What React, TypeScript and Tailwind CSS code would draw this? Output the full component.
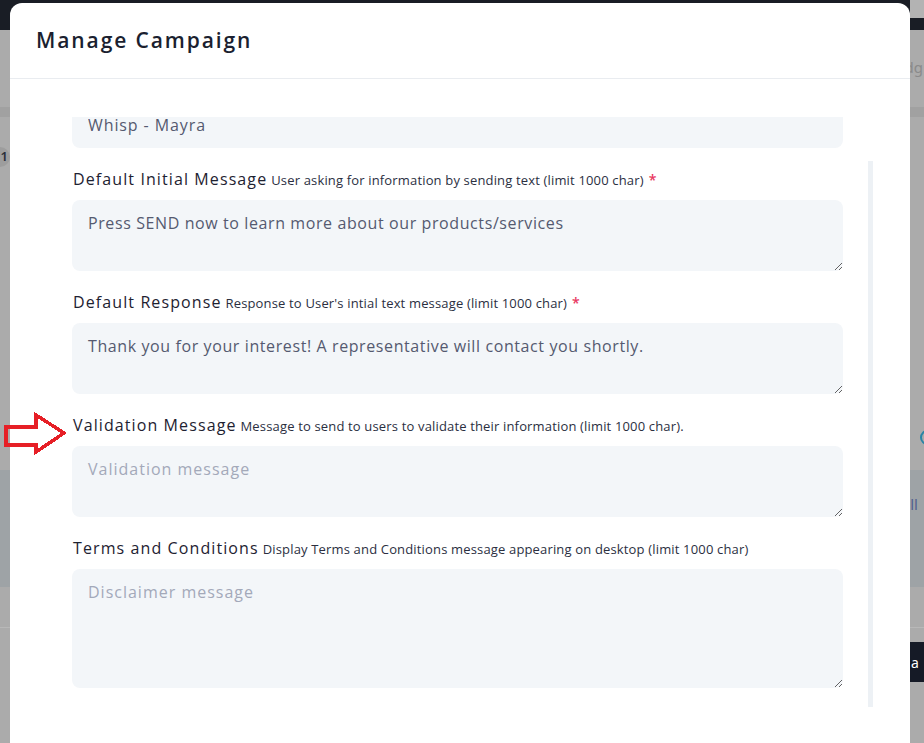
import type { ReactNode } from "react";

type Field = {
  label: string;
  hint: string;
  required?: boolean;
  value?: string;
  placeholder?: string;
  tall?: boolean;
};

const fields: Field[] = [
  {
    label: "Default Initial Message",
    hint: "User asking for information by sending text (limit 1000 char)",
    required: true,
    value: "Press SEND now to learn more about our products/services",
  },
  {
    label: "Default Response",
    hint: "Response to User's intial text message (limit 1000 char)",
    required: true,
    value: "Thank you for your interest! A representative will contact you shortly.",
  },
  {
    label: "Validation Message",
    hint: "Message to send to users to validate their information (limit 1000 char).",
    placeholder: "Validation message",
  },
  {
    label: "Terms and Conditions",
    hint: "Display Terms and Conditions message appearing on desktop (limit 1000 char)",
    placeholder: "Disclaimer message",
    tall: true,
  },
];

function FieldLabel({ label, hint, required }: { label: string; hint: string; required?: boolean }) {
  return (
    <div className="flex h-6 items-baseline whitespace-nowrap pl-px">
      <span className="text-[16px] tracking-[1.1px] text-[#1e2231]">{label}</span>
      <span className="ml-[4px] text-[13px] tracking-[0.16px] text-[#2b2f3f]">{hint}</span>
      {required ? <span className="ml-[5px] text-[14px] font-semibold text-[#e8375f]">*</span> : null}
    </div>
  );
}

function Backdrop({ children }: { children: ReactNode }) {
  return (
    <div className="relative h-[743px] w-[924px] overflow-hidden bg-[#ababab]">
      {/* dimmed page behind the dialog */}
      <div className="flex h-[30px]">
        <div className="flex-1 bg-[#191d25]" />
        <div className="flex w-[14px] flex-col">
          <div className="h-[18px] bg-[#b3b3b3]" />
          <div className="flex-1 bg-[#191d25]" />
        </div>
      </div>
      <div className="flex h-[77px] items-center justify-end pb-[2px] pr-px">
        <span className="text-[15px] leading-none text-[#8a8a8a]">dg</span>
      </div>
      <div className="h-[10px] bg-[#a1a1a1]" />
      <div className="h-[30px]" />
      <div className="flex h-[20px] items-center">
        <span className="-ml-[6px] flex h-[20px] w-[16px] items-center justify-end rounded-r-full bg-[#9d9d9d] pr-[2px] text-[13px] font-semibold text-[#2b2f3a]">
          1
        </span>
      </div>
      <div className="h-[260px]" />
      <div className="flex h-[20px] items-center justify-end">
        <span className="-mr-[11px] h-[15px] w-[15px] rounded-full border-2 border-[#2a85a6]" />
      </div>
      <div className="h-[23px]" />
      <div className="flex h-[117px] items-start justify-end bg-[#9ea3a6] pt-[27px]">
        <span className="pr-[6px] text-[15px] leading-none text-[#50608f]">ll</span>
      </div>
      <div className="h-[40px]" />
      <div className="h-px bg-[#b8b8b8]" />
      <div className="h-[14px]" />
      <div className="flex h-[40px] justify-end">
        <span className="flex w-[14px] items-center bg-[#151a26] pl-[1px] text-[14px] text-white">a</span>
      </div>
      {children}
    </div>
  );
}

function RedArrow() {
  return (
    <svg
      className="absolute left-0 top-[410px]"
      width="70"
      height="48"
      viewBox="0 0 70 48"
      shapeRendering="crispEdges"
    >
      <polygon
        points="6,17 36,17 36,5 64,23 36,42 36,35 6,35"
        fill="none"
        stroke="#e61f26"
        strokeWidth="3.5"
        strokeLinejoin="miter"
      />
    </svg>
  );
}

export default function App() {
  return (
    <Backdrop>
      <div
        className="absolute left-[10px] top-[3px] h-[760px] w-[900px] rounded-t-[12px] bg-white"
        style={{ fontFamily: '"Open Sans", "Noto Sans", sans-serif' }}
      >
        <div className="flex h-[76px] items-center border-b border-[#e9ecf0] px-[26px]">
          <h1 className="text-[21px] font-semibold tracking-[1.9px] text-[#1b1f30]">Manage Campaign</h1>
        </div>

        <div className="flex pt-[38px]">
          <div className="ml-[62px] h-[590px] w-[771px] overflow-hidden">
            <div className="-mt-[15px]">
              <input
                className="h-[46px] w-full rounded-lg bg-[#f3f6f9] px-4 text-[16px] tracking-[0.9px] text-[#555a70] outline-none"
                defaultValue="Whisp - Mayra"
              />

              {fields.map((field) => (
                <div key={field.label} className="mt-[19px]">
                  <FieldLabel label={field.label} hint={field.hint} required={field.required} />
                  <textarea
                    className={`mt-[9px] block w-full rounded-lg bg-[#f3f6f9] px-4 py-[11px] text-[16px] leading-6 tracking-[0.6px] text-[#555a70] outline-none placeholder:tracking-[1px] placeholder:text-[#a3a9b9] ${
                      field.tall ? "h-[119px]" : "h-[71px]"
                    }`}
                    defaultValue={field.value}
                    placeholder={field.placeholder}
                  />
                </div>
              ))}
            </div>
          </div>

          <div className="ml-[25px] mt-[44px] h-[546px] w-[5px] bg-[#edf1f5]" />
        </div>
      </div>

      <RedArrow />
    </Backdrop>
  );
}
